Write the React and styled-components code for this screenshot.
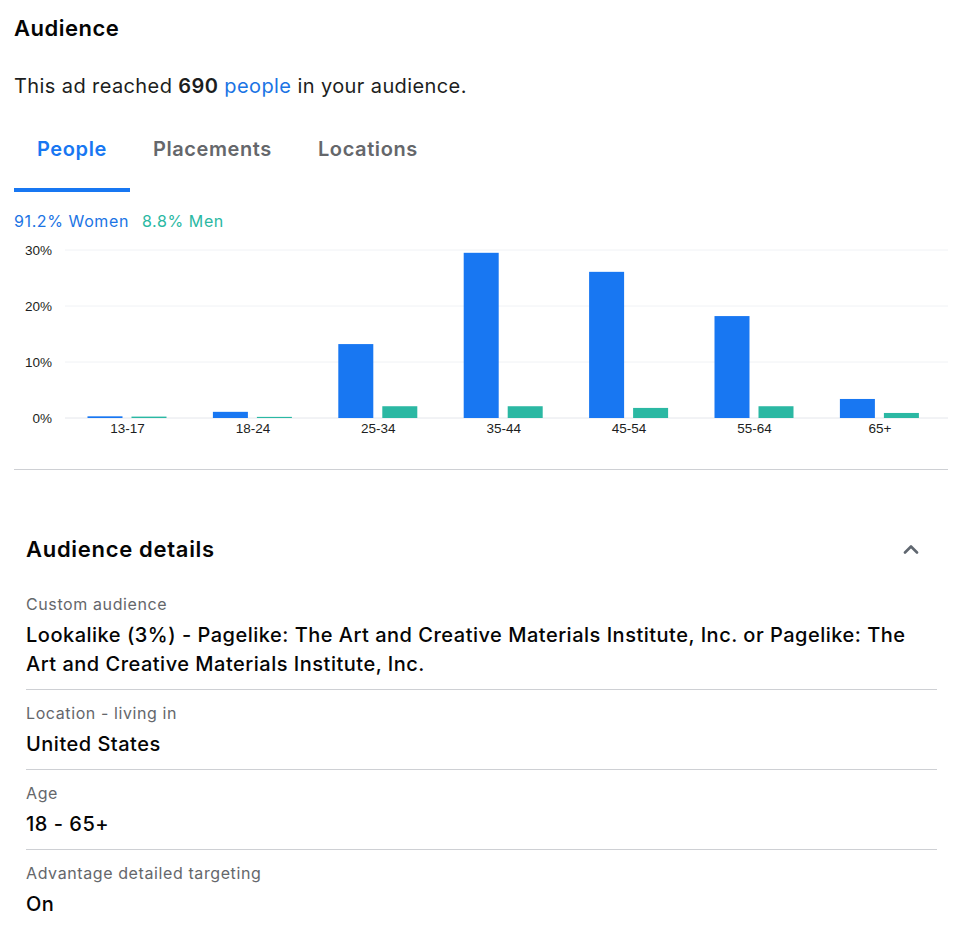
import React from 'react';
import styled, { createGlobalStyle } from 'styled-components';

const GlobalStyle = createGlobalStyle`
  body {
    margin: 0;
    background: #ffffff;
    font-family: Inter, "Liberation Sans", Arial, sans-serif;
    color: #1c1e21;
  }
`;

const Page = styled.div`
  width: 968px;
  padding: 14px 20px 0 14px;
  box-sizing: border-box;
`;

const Title = styled.h2`
  margin: 0;
  font-size: 22px;
  line-height: 28px;
  font-weight: 600;
  letter-spacing: 0.5px;
  color: #050505;
`;

const Summary = styled.p`
  margin: 31px 0 0;
  font-size: 20px;
  line-height: 26px;
  letter-spacing: 0.4px;
  color: #1c1e21;

  strong {
    font-weight: 600;
  }
`;

const Link = styled.a`
  color: #1b74e4;
  text-decoration: none;
`;

const Tabs = styled.div`
  display: flex;
  margin-top: 11px;
`;

const Tab = styled.div`
  padding: 26px 23px 26px 23px;
  font-size: 20px;
  line-height: 26px;
  font-weight: 600;
  letter-spacing: 0.6px;
  color: ${(p) => (p.$active ? '#1877f2' : '#65676b')};
  border-bottom: 4px solid ${(p) => (p.$active ? '#1877f2' : 'transparent')};
  cursor: pointer;
`;

const Legend = styled.div`
  display: flex;
  gap: 13px;
  margin-top: 19px;
  font-size: 16px;
  line-height: 20px;
  letter-spacing: 0.6px;
`;

const LegendItem = styled.span`
  color: ${(p) => p.$color};
`;

const ChartSvg = styled.svg`
  display: block;
  margin-top: 9px;
  font-family: "Liberation Sans", Arial, sans-serif;
`;

const Divider = styled.div`
  margin-top: 29px;
  height: 1px;
  background: #ced0d4;
`;

const Details = styled.section`
  margin: 65px 11px 0 12px;
`;

const DetailsHeader = styled.div`
  display: flex;
  align-items: center;
  justify-content: space-between;
  padding-right: 18px;
  margin-bottom: 18px;
`;

const DetailsTitle = styled.h3`
  margin: 0;
  font-size: 22px;
  line-height: 28px;
  font-weight: 600;
  letter-spacing: 0.7px;
  color: #050505;
`;

const Row = styled.div`
  padding: 13px 0 10px;
  border-bottom: ${(p) => (p.$last ? 'none' : '1px solid #ced0d4')};
`;

const Label = styled.div`
  font-size: 16px;
  line-height: 20px;
  letter-spacing: 0.6px;
  color: #65676b;
`;

const Value = styled.div`
  margin-top: 7px;
  font-size: 20px;
  line-height: 29px;
  font-weight: 500;
  letter-spacing: 0.5px;
  color: #050505;
`;

const BLUE = '#1877f2';
const TEAL = '#2bb8a3';

const groups = [
  { label: '13-17', women: 0.3, men: 0.25 },
  { label: '18-24', women: 1.1, men: 0.2 },
  { label: '25-34', women: 13.2, men: 2.1 },
  { label: '35-44', women: 29.5, men: 2.1 },
  { label: '45-54', women: 26.1, men: 1.8 },
  { label: '55-64', women: 18.2, men: 2.1 },
  { label: '65+', women: 3.4, men: 0.9 },
];

const BASE = 178;
const PER = 5.6;

function Chart() {
  return (
    <ChartSvg width="934" height="200" viewBox="0 0 934 200">
      {[30, 20, 10, 0].map((v) => {
        const y = BASE - v * PER;
        return (
          <g key={v}>
            <line x1="51" x2="934" y1={y} y2={y} stroke={v === 0 ? '#e4e6eb' : '#f0f2f5'} strokeWidth="1" />
            <text x="38" y={y + 4.5} fontSize="13.5" textAnchor="end" fill="#1c1e21">
              {v}%
            </text>
          </g>
        );
      })}
      {groups.map((g, i) => {
        const c = 113.5 + 125.4 * i;
        const hw = g.women * PER;
        const hm = g.men * PER;
        return (
          <g key={g.label}>
            <rect x={c - 40} y={BASE - hw} width="35" height={hw} fill={BLUE} />
            <rect x={c + 4} y={BASE - hm} width="35" height={hm} fill={TEAL} />
            <text x={c} y={BASE + 14.5} fontSize="13.5" textAnchor="middle" fill="#1c1e21">
              {g.label}
            </text>
          </g>
        );
      })}
    </ChartSvg>
  );
}

function Chevron() {
  return (
    <svg width="16" height="10" viewBox="0 0 16 10">
      <path d="M2 8.5 L8 2.5 L14 8.5" fill="none" stroke="#606770" strokeWidth="2.6" strokeLinecap="round" strokeLinejoin="round" />
    </svg>
  );
}

const rows = [
  {
    label: 'Custom audience',
    value:
      'Lookalike (3%) - Pagelike: The Art and Creative Materials Institute, Inc. or Pagelike: The Art and Creative Materials Institute, Inc.',
  },
  { label: 'Location - living in', value: 'United States' },
  { label: 'Age', value: '18 - 65+' },
  { label: 'Advantage detailed targeting', value: 'On' },
];

export default function App() {
  return (
    <>
      <GlobalStyle />
      <Page>
        <Title>Audience</Title>
        <Summary>
          This ad reached <strong>690</strong> <Link href="#">people</Link> in your audience.
        </Summary>
        <Tabs>
          <Tab $active>People</Tab>
          <Tab>Placements</Tab>
          <Tab>Locations</Tab>
        </Tabs>
        <Legend>
          <LegendItem $color="#1b74e4">91.2% Women</LegendItem>
          <LegendItem $color={TEAL}>8.8% Men</LegendItem>
        </Legend>
        <Chart />
        <Divider />
        <Details>
          <DetailsHeader>
            <DetailsTitle>Audience details</DetailsTitle>
            <Chevron />
          </DetailsHeader>
          {rows.map((r, i) => (
            <Row key={r.label} $last={i === rows.length - 1}>
              <Label>{r.label}</Label>
              <Value>{r.value}</Value>
            </Row>
          ))}
        </Details>
      </Page>
    </>
  );
}
